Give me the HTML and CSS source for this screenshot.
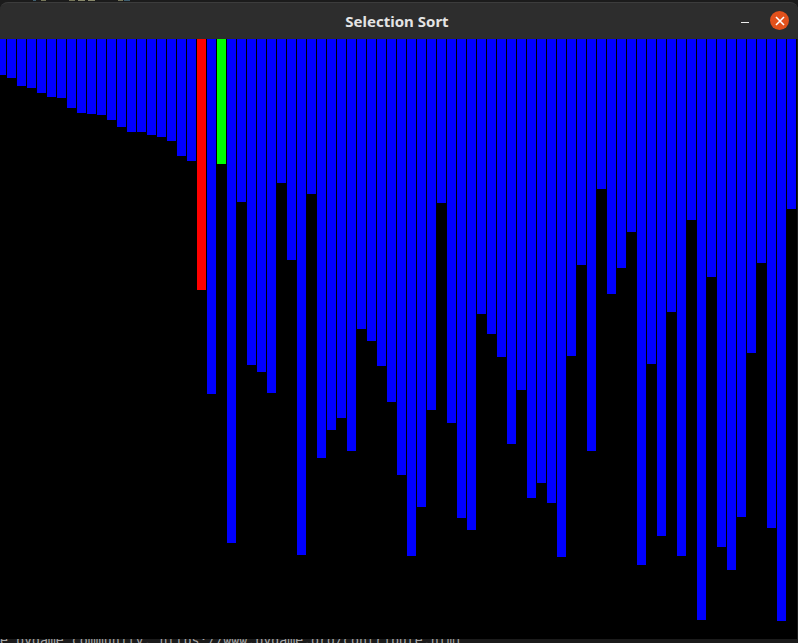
FILE: index.html
```html
<!DOCTYPE html>
<html>
    <head>
        <title>Selection Sort</title>
        <link rel="stylesheet" href="styles.css">
    </head>

    <body>
        <svg class="behind" width="798" height="2">
            <rect x="33" width="3" height="1" fill="#3f5f70"/>
            <rect x="41" width="5" height="1" fill="#77775a"/>
            <rect x="69" width="6" height="1" fill="#77775a"/>
            <rect x="78" width="7" height="1" fill="#88886a"/>
            <rect x="88" width="7" height="1" fill="#88886a"/>
            <rect x="118" width="5" height="1" fill="#77775a"/>
            <rect x="124" width="6" height="1" fill="#3f5f70"/>
        </svg>

        <div class="titlebar">
            <span class="title">Selection Sort</span>
            <div class="buttons">
                <span class="minimize"></span>
                <span class="close">
                    <svg width="10" height="10" viewBox="0 0 10 10">
                        <path d="M1 1L9 9M9 1L1 9" stroke="#fff" stroke-width="1.6" fill="none"/>
                    </svg>
                </span>
            </div>
        </div>

        <div class="canvas">
            <div class="bars">
                <div class="bar" style="height:36px"></div>
                <div class="bar" style="height:39px"></div>
                <div class="bar" style="height:47px"></div>
                <div class="bar" style="height:49px"></div>
                <div class="bar" style="height:54px"></div>
                <div class="bar" style="height:58px"></div>
                <div class="bar" style="height:59px"></div>
                <div class="bar" style="height:69px"></div>
                <div class="bar" style="height:74px"></div>
                <div class="bar" style="height:75px"></div>
                <div class="bar" style="height:76px"></div>
                <div class="bar" style="height:81px"></div>
                <div class="bar" style="height:88px"></div>
                <div class="bar" style="height:93px"></div>
                <div class="bar" style="height:93px"></div>
                <div class="bar" style="height:96px"></div>
                <div class="bar" style="height:98px"></div>
                <div class="bar" style="height:102px"></div>
                <div class="bar" style="height:117px"></div>
                <div class="bar" style="height:122px"></div>
                <div class="bar red" style="height:251px"></div>
                <div class="bar" style="height:355px"></div>
                <div class="bar green" style="height:125px"></div>
                <div class="bar" style="height:504px"></div>
                <div class="bar" style="height:163px"></div>
                <div class="bar" style="height:326px"></div>
                <div class="bar" style="height:333px"></div>
                <div class="bar" style="height:354px"></div>
                <div class="bar" style="height:144px"></div>
                <div class="bar" style="height:221px"></div>
                <div class="bar" style="height:516px"></div>
                <div class="bar" style="height:155px"></div>
                <div class="bar" style="height:419px"></div>
                <div class="bar" style="height:391px"></div>
                <div class="bar" style="height:379px"></div>
                <div class="bar" style="height:412px"></div>
                <div class="bar" style="height:290px"></div>
                <div class="bar" style="height:302px"></div>
                <div class="bar" style="height:327px"></div>
                <div class="bar" style="height:363px"></div>
                <div class="bar" style="height:436px"></div>
                <div class="bar" style="height:517px"></div>
                <div class="bar" style="height:468px"></div>
                <div class="bar" style="height:371px"></div>
                <div class="bar" style="height:164px"></div>
                <div class="bar" style="height:384px"></div>
                <div class="bar" style="height:479px"></div>
                <div class="bar" style="height:491px"></div>
                <div class="bar" style="height:275px"></div>
                <div class="bar" style="height:295px"></div>
                <div class="bar" style="height:318px"></div>
                <div class="bar" style="height:405px"></div>
                <div class="bar" style="height:351px"></div>
                <div class="bar" style="height:459px"></div>
                <div class="bar" style="height:444px"></div>
                <div class="bar" style="height:464px"></div>
                <div class="bar" style="height:518px"></div>
                <div class="bar" style="height:317px"></div>
                <div class="bar" style="height:226px"></div>
                <div class="bar" style="height:412px"></div>
                <div class="bar" style="height:150px"></div>
                <div class="bar" style="height:255px"></div>
                <div class="bar" style="height:229px"></div>
                <div class="bar" style="height:193px"></div>
                <div class="bar" style="height:526px"></div>
                <div class="bar" style="height:325px"></div>
                <div class="bar" style="height:497px"></div>
                <div class="bar" style="height:273px"></div>
                <div class="bar" style="height:517px"></div>
                <div class="bar" style="height:181px"></div>
                <div class="bar" style="height:581px"></div>
                <div class="bar" style="height:238px"></div>
                <div class="bar" style="height:508px"></div>
                <div class="bar" style="height:531px"></div>
                <div class="bar" style="height:478px"></div>
                <div class="bar" style="height:314px"></div>
                <div class="bar" style="height:224px"></div>
                <div class="bar" style="height:489px"></div>
                <div class="bar" style="height:582px"></div>
                <div class="bar" style="height:170px"></div>
            </div>
        </div>

        <div class="terminal">e pygame community. https://www.pygame.org/contribute.html</div>
    </body>
</html>
```

FILE: styles.css
```css
html {
    background-color: #1b1b1b;
}

body {
    margin: 0;
    width: 798px;
    height: 643px;
    overflow: hidden;
    display: flex;
    flex-direction: column;
}

.behind {
    display: block;
    flex: none;
}

.titlebar {
    flex: none;
    height: 37px;
    box-sizing: border-box;
    padding-right: 4px;
    display: flex;
    align-items: center;
    justify-content: center;
    position: relative;
    background-color: #2d2d2d;
    border-top: 1px solid #3c3c3c;
    border-radius: 8px 8px 0 0;
}

.title {
    font-family: "Noto Sans", sans-serif;
    font-weight: bold;
    font-size: 15px;
    color: #e4e4e4;
}

.buttons {
    position: absolute;
    top: 8px;
    right: 9px;
    display: flex;
    align-items: center;
    gap: 21px;
}

.minimize {
    width: 8px;
    height: 1px;
    margin-top: 4px;
    background-color: #eee;
}

.close {
    width: 19px;
    height: 19px;
    border-radius: 50%;
    background-color: #e2511c;
    display: flex;
    align-items: center;
    justify-content: center;
}

.canvas {
    flex: none;
    width: 797px;
    height: 600px;
    overflow: hidden;
    background-color: black;
}

.bars {
    display: flex;
    align-items: flex-start;
    gap: 1px;
    margin-left: -3px;
}

.bar {
    flex: none;
    width: 9px;
    background-color: #0000ff;
}

.red {
    background-color: #ff0000;
}

.green {
    background-color: #00ff00;
}

.terminal {
    flex: none;
    height: 4px;
    overflow: hidden;
    font-family: "DejaVu Sans Mono", monospace;
    font-size: 13.25px;
    line-height: 3px;
    white-space: pre;
    color: #a8a8a8;
}
```
